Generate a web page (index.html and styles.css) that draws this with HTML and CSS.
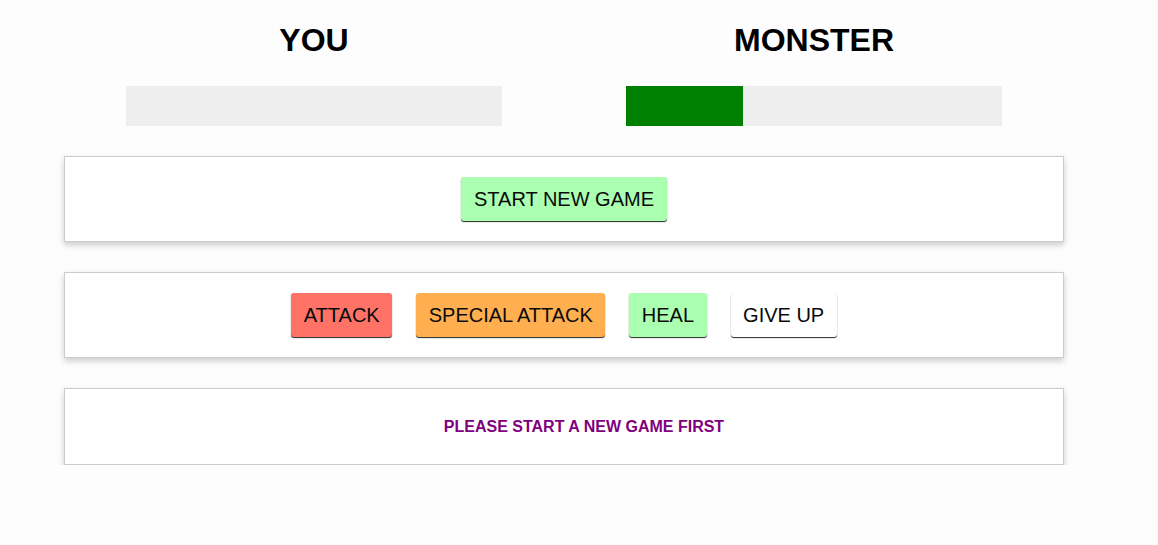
FILE: index.html
```html
<!DOCTYPE html>
<html lang="en">
<head>
<meta charset="utf-8">
<title>Monster Slayer</title>
<link rel="stylesheet" href="styles.css">
</head>
<body>
<main class="app">
  <div class="row">
    <div class="col">
      <h1 class="name">YOU</h1>
      <div class="healthbar"><div class="healthbar-value" style="width: 0%"></div></div>
    </div>
    <div class="col">
      <h1 class="name">MONSTER</h1>
      <div class="healthbar"><div class="healthbar-value" style="width: 31%"></div></div>
    </div>
  </div>
  <section class="controls">
    <button class="btn btn-start">START NEW GAME</button>
  </section>
  <section class="controls">
    <button class="btn btn-attack">ATTACK</button>
    <button class="btn btn-special">SPECIAL ATTACK</button>
    <button class="btn btn-heal">HEAL</button>
    <button class="btn btn-giveup">GIVE UP</button>
  </section>
  <section class="log">
    <ul class="log-list">
      <li class="log-msg">PLEASE START A NEW GAME FIRST</li>
    </ul>
  </section>
</main>
</body>
</html>
```
FILE: styles.css
```css
* { box-sizing: border-box; }
html, body {
  margin: 0;
  background: #fdfdfd;
  font-family: "Liberation Sans", Arial, sans-serif;
  color: #0a0a0a;
}
.app {
  width: 1000px;
  margin-left: 64px;
}
.row {
  display: flex;
}
.col {
  width: 500px;
  display: flex;
  flex-direction: column;
  align-items: center;
}
.name {
  margin: 22px 0 0;
  font-size: 32px;
  line-height: 37px;
  font-weight: bold;
  color: #000;
}
.healthbar {
  width: 376px;
  height: 40px;
  margin-top: 27px;
  background: #eeeeee;
}
.healthbar-value {
  height: 100%;
  background: #008000;
}
.controls {
  margin-top: 30px;
  padding: 20px 10px 20px;
  border: 1px solid #cccccc;
  box-shadow: 0 3px 6px #cccccc;
  background: #ffffff;
  display: flex;
  justify-content: center;
  gap: 24px;
}
.btn {
  font-family: "Liberation Sans", Arial, sans-serif;
  font-size: 20px;
  line-height: 20px;
  height: 44px;
  padding: 12px 12.5px;
  border: none;
  border-radius: 3px;
  color: #0a0a0a;
  box-shadow: 0 1px 1px rgba(0, 0, 0, 0.85);
  background: #eeeeee;
  margin: 0;
}
.btn-start, .btn-heal { background: #aaffb0; }
.btn-attack { background: #ff7367; }
.btn-special { background: #ffaf4f; }
.btn-giveup { background: #ffffff; }
.log {
  margin-top: 30px;
  padding: 29px 10px 28px;
  border: 1px solid #cccccc;
  box-shadow: 0 3px 6px #cccccc;
  background: #ffffff;
  text-align: center;
}
.log-list {
  margin: 0;
  padding: 0 0 0 40px;
  list-style: none;
}
.log-msg {
  margin: 0;
  font-size: 16px;
  line-height: 18px;
  font-weight: bold;
  color: #800080;
}
```
